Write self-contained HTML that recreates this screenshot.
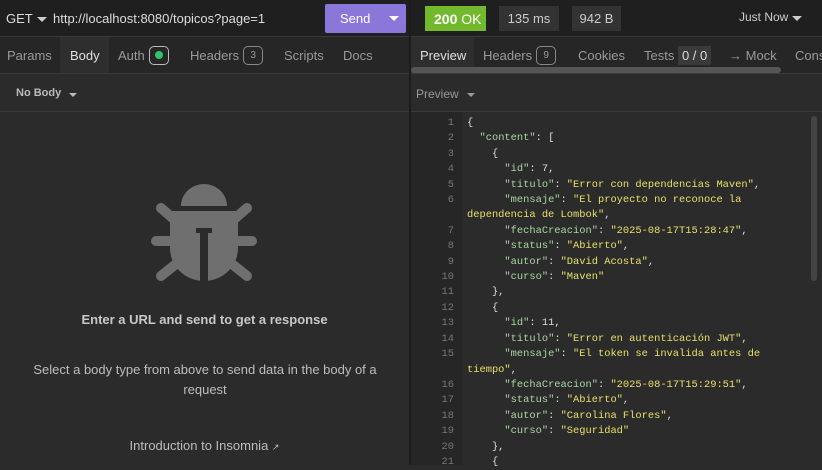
<!DOCTYPE html>
<html><head><meta charset="utf-8"><style>
*{box-sizing:border-box;margin:0;padding:0}
body{width:822px;height:465px;overflow:hidden;background:#2b2b2b;font-family:"Liberation Sans",sans-serif;color:#ccc;position:relative;font-size:13px}
.abs{position:absolute}
.top{left:0;top:0;width:822px;height:37px;background:#1f1f1f;border-bottom:1px solid #3a3a3a}
.tabs{top:37px;height:37px;background:#262626;border-bottom:1px solid #3a3a3a}
.tab{position:absolute;top:0;height:36px;line-height:38px;color:#9a9a9a;font-size:13px}
.badge{display:inline-block;border:1px solid #888;border-radius:5px;width:20px;height:19px;line-height:17px;text-align:center;font-size:10px;vertical-align:middle;margin-left:4px;margin-top:-3px}
.code{left:411px;top:116px;width:411px;font-family:"Liberation Mono",monospace;font-size:10.4px;line-height:15.4px;white-space:pre}
.ln{display:inline-block;width:56px;text-align:right;color:#777;padding-right:13px}
.k{color:#a8d8a0}.s{color:#e8e06a}.p{color:#ddd}
</style></head><body>
<div class="abs top"></div>
<div class="abs" style="left:6px;top:11px;color:#ddd;font-size:13px">GET</div>
<div class="abs" style="left:37px;top:17px;border-left:5px solid transparent;border-right:5px solid transparent;border-top:5px solid #ccc"></div>
<div class="abs" style="left:53px;top:11px;color:#ddd;font-size:13px">http://localhost:8080/topicos?page=1</div>
<div class="abs" style="left:325px;top:4px;width:81px;height:29px;background:#8b76d9;border-radius:2px"></div>
<div class="abs" style="left:340px;top:11px;color:#fff;font-size:13px">Send</div>
<div class="abs" style="left:389px;top:16px;border-left:5px solid transparent;border-right:5px solid transparent;border-top:5px solid #fff"></div>
<div class="abs" style="left:409px;top:0;width:2px;height:465px;background:#1c1c1c"></div>
<div class="abs" style="left:425px;top:6px;width:61px;height:25px;background:#72b92e"></div>
<div class="abs" style="left:434px;top:11px;color:#fff;font-size:14px"><b>200</b> OK</div>
<div class="abs" style="left:499px;top:6px;width:60px;height:25px;background:#333;text-align:center;line-height:25px;color:#ccc">135 ms</div>
<div class="abs" style="left:572px;top:6px;width:49px;height:25px;background:#333;text-align:center;line-height:25px;color:#ccc">942 B</div>
<div class="abs" style="left:739px;top:10px;color:#ccc;font-size:12px">Just Now</div>
<div class="abs" style="left:792px;top:16px;border-left:5px solid transparent;border-right:5px solid transparent;border-top:5px solid #ccc"></div>

<div class="abs tabs" style="left:0;width:409px">
<div class="abs" style="left:60px;top:0;width:49px;height:36px;background:#2e2e2e"></div>
<div class="tab" style="left:7px">Params</div>
<div class="tab" style="left:70px;color:#e0e0e0">Body</div>
<div class="tab" style="left:118px">Auth<span class="badge" style="position:relative;border-color:#bbb"><span style="position:absolute;left:5px;top:4px;width:8px;height:8px;border-radius:50%;background:#2ec46a"></span></span></div>
<div class="tab" style="left:190px">Headers<span class="badge">3</span></div>
<div class="tab" style="left:284px">Scripts</div>
<div class="tab" style="left:343px">Docs</div>
</div>
<div class="abs tabs" style="left:411px;width:411px">
<div class="abs" style="left:0;top:0;width:63px;height:36px;background:#2e2e2e"></div>
<div class="tab" style="left:9px;color:#e0e0e0">Preview</div>
<div class="tab" style="left:72px">Headers<span class="badge">9</span></div>
<div class="tab" style="left:167px">Cookies</div>
<div class="tab" style="left:233px">Tests <span style="background:#3a3a3a;color:#ddd;padding:2px 4px">0 / 0</span></div>
<div class="tab" style="left:318px">→ Mock</div>
<div class="tab" style="left:384px">Cons</div>
</div>
<div class="abs" style="left:411px;top:67px;width:370px;height:6px;background:#555;border-radius:3px"></div>
<div class="abs" style="left:0;top:74px;width:409px;height:38px;border-bottom:1px solid #3a3a3a;background:#2b2b2b"></div>
<div class="abs" style="left:16px;top:87px;font-size:11px;font-weight:bold;color:#bbb">No Body</div>
<div class="abs" style="left:69px;top:93px;border-left:4px solid transparent;border-right:4px solid transparent;border-top:4px solid #bbb"></div>
<div class="abs" style="left:411px;top:74px;width:411px;height:38px;border-bottom:1px solid #3a3a3a"></div>
<div class="abs" style="left:416px;top:87px;font-size:12px;color:#999">Preview</div>
<div class="abs" style="left:467px;top:93px;border-left:4px solid transparent;border-right:4px solid transparent;border-top:4px solid #999"></div>

<svg class="abs" style="left:0;top:0" width="409" height="300" viewBox="0 0 409 300">
<g fill="#6f6f6f"><path d="M181 206 A23 22 0 0 1 227 206 Z"/>
<path d="M170 211 H238 V248 A34 33 0 0 1 170 248 Z"/></g>
<g stroke="#6f6f6f" stroke-width="10" stroke-linecap="round"><line x1="161" y1="208" x2="176" y2="221"/><line x1="247" y1="208" x2="232" y2="221"/><line x1="156" y1="241" x2="172" y2="241"/><line x1="252" y1="241" x2="236" y2="241"/><line x1="161" y1="276" x2="176" y2="264"/><line x1="247" y1="276" x2="232" y2="264"/></g>
<rect x="200" y="228" width="8" height="55" fill="#2b2b2b"/>
<rect x="196" y="228" width="16" height="5" fill="#2b2b2b"/>
</svg>
<div class="abs" style="left:0;width:409px;top:312px;text-align:center;font-weight:bold;font-size:13px;color:#c8c8c8">Enter a URL and send to get a response</div>
<div class="abs" style="left:20px;width:370px;top:360px;text-align:center;font-size:13px;line-height:20px;color:#bdbdbd">Select a body type from above to send data in the body of a request</div>
<div class="abs" style="left:0;width:409px;top:438px;text-align:center;font-size:13px;color:#bdbdbd">Introduction to Insomnia <span style="font-size:9px">↗</span></div>

<div class="abs" style="left:411px;top:112px;width:51px;height:353px;background:#262626"></div>
<div class="abs" style="left:811px;top:116px;width:6px;height:165px;background:#444;border-radius:3px"></div>
<div class="abs code"><span class="ln">1</span><span class="p">{</span>
<span class="ln">2</span><span class="p">  </span><span class="k">"content"</span><span class="p">: [</span>
<span class="ln">3</span><span class="p">    {</span>
<span class="ln">4</span>      <span class="k">"id"</span><span class="p">: 7,</span>
<span class="ln">5</span>      <span class="k">"titulo"</span><span class="p">: </span><span class="s">"Error con dependencias Maven"</span><span class="p">,</span>
<span class="ln">6</span>      <span class="k">"mensaje"</span><span class="p">: </span><span class="s">"El proyecto no reconoce la</span>
<span class="ln"></span><span class="s">dependencia de Lombok"</span><span class="p">,</span>
<span class="ln">7</span>      <span class="k">"fechaCreacion"</span><span class="p">: </span><span class="s">"2025-08-17T15:28:47"</span><span class="p">,</span>
<span class="ln">8</span>      <span class="k">"status"</span><span class="p">: </span><span class="s">"Abierto"</span><span class="p">,</span>
<span class="ln">9</span>      <span class="k">"autor"</span><span class="p">: </span><span class="s">"David Acosta"</span><span class="p">,</span>
<span class="ln">10</span>      <span class="k">"curso"</span><span class="p">: </span><span class="s">"Maven"</span>
<span class="ln">11</span><span class="p">    },</span>
<span class="ln">12</span><span class="p">    {</span>
<span class="ln">13</span>      <span class="k">"id"</span><span class="p">: 11,</span>
<span class="ln">14</span>      <span class="k">"titulo"</span><span class="p">: </span><span class="s">"Error en autenticación JWT"</span><span class="p">,</span>
<span class="ln">15</span>      <span class="k">"mensaje"</span><span class="p">: </span><span class="s">"El token se invalida antes de</span>
<span class="ln"></span><span class="s">tiempo"</span><span class="p">,</span>
<span class="ln">16</span>      <span class="k">"fechaCreacion"</span><span class="p">: </span><span class="s">"2025-08-17T15:29:51"</span><span class="p">,</span>
<span class="ln">17</span>      <span class="k">"status"</span><span class="p">: </span><span class="s">"Abierto"</span><span class="p">,</span>
<span class="ln">18</span>      <span class="k">"autor"</span><span class="p">: </span><span class="s">"Carolina Flores"</span><span class="p">,</span>
<span class="ln">19</span>      <span class="k">"curso"</span><span class="p">: </span><span class="s">"Seguridad"</span>
<span class="ln">20</span><span class="p">    },</span>
<span class="ln">21</span><span class="p">    {</span></div>
</body></html>
